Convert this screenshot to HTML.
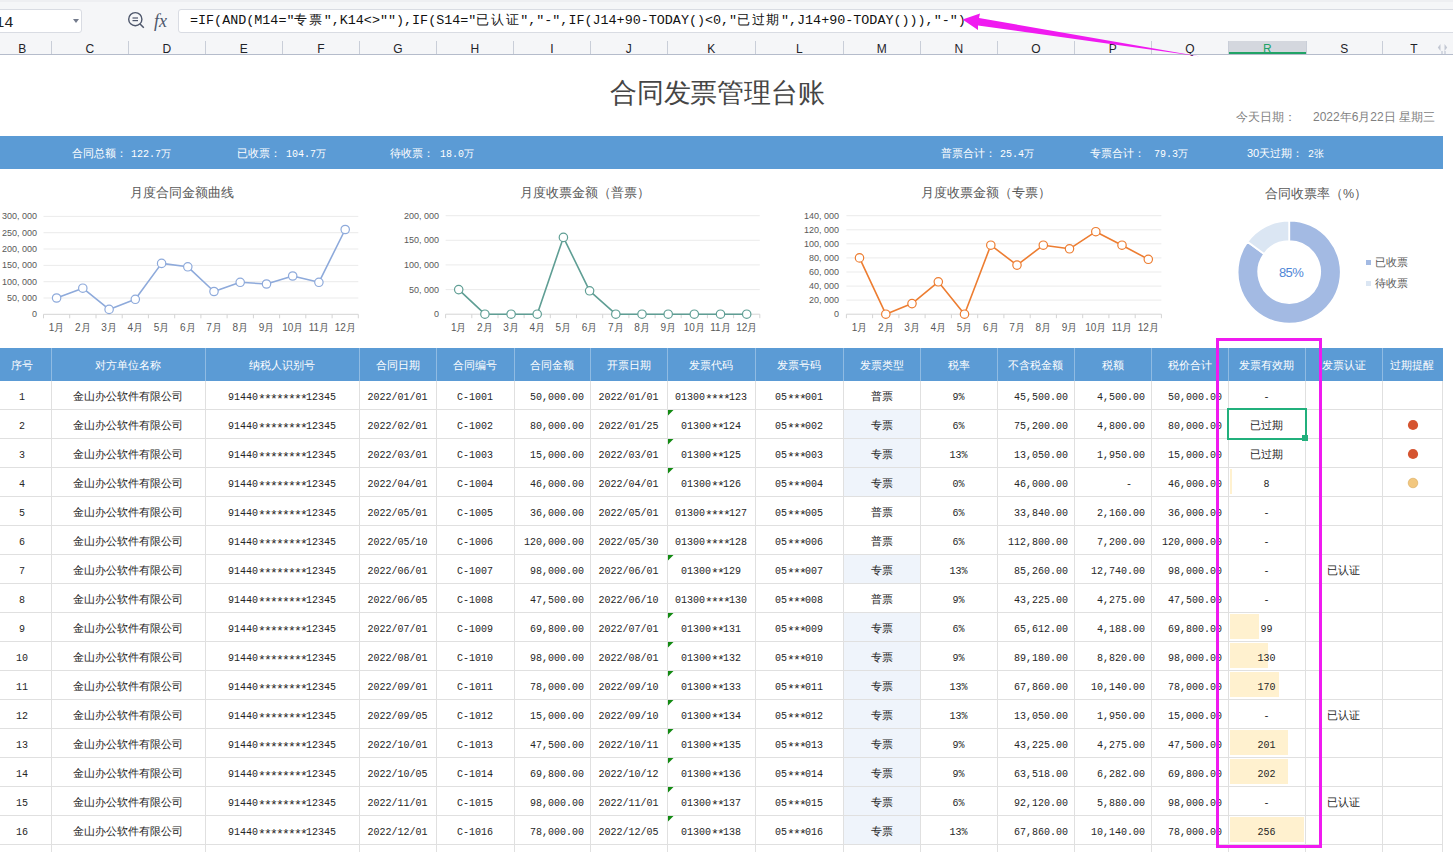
<!DOCTYPE html><html><head><meta charset="utf-8"><style>
html,body{margin:0;padding:0;width:1453px;height:852px;overflow:hidden;background:#fff;position:relative;font-family:"Liberation Sans", sans-serif}
.ab{position:absolute;white-space:nowrap}
.c{position:absolute;white-space:nowrap;text-align:center}
.m{font-family:"Liberation Mono", monospace}
.m b{font-weight:normal;letter-spacing:1.6px}
.cell{position:absolute;height:28px;line-height:34px;font-size:10px;color:#262626;font-family:"Liberation Mono", monospace;white-space:nowrap;overflow:visible}
.cj{font-size:11px;line-height:33px}
.cell i{font-style:normal;position:relative;top:3px;font-size:13px;letter-spacing:-1.8px;line-height:10px}
.hd{position:absolute;top:348px;height:33px;line-height:35px;font-size:11px;color:#fff;text-align:center}
</style></head><body>
<div class="ab" style="left:0;top:0;width:1453px;height:55px;background:#f5f6f8"></div>
<div class="ab" style="left:0;top:0;width:1453px;height:2px;background:#eeeff2"></div>
<div class="ab" style="left:-10px;top:9px;width:90px;height:22px;background:#fff;border:1px solid #d9dce3;border-radius:3px"></div>
<div class="ab m" style="left:-5px;top:13px;font-size:15.5px;line-height:20px;color:#222">14</div>
<div class="ab" style="left:73px;top:19px;width:0;height:0;border-left:3.5px solid transparent;border-right:3.5px solid transparent;border-top:4px solid #737b8c"></div>
<svg class="ab" style="left:125px;top:9px" width="22" height="22" viewBox="0 0 22 22"><circle cx="10.3" cy="10.2" r="6.6" fill="none" stroke="#4d566b" stroke-width="1.4"/><line x1="15" y1="15" x2="18.8" y2="18.8" stroke="#4d566b" stroke-width="1.5"/><line x1="7.5" y1="9" x2="13" y2="9" stroke="#4d566b" stroke-width="1.2"/><line x1="7.5" y1="11.6" x2="13" y2="11.6" stroke="#4d566b" stroke-width="1.2"/></svg>
<div class="ab" style="left:154px;top:10px;font-family:'Liberation Serif',serif;font-style:italic;font-size:18px;line-height:22px;color:#4d566b">fx</div>
<div class="ab" style="left:178px;top:9px;width:1290px;height:22px;background:#fff;border:1px solid #d9dce3;border-radius:3px"></div>
<div class="ab m" style="left:190px;top:12px;font-size:13.4px;line-height:17px;color:#111">=IF(AND(M14=″<b>专票</b>″,K14&lt;&gt;″″),IF(S14=″<b>已认证</b>″,″-″,IF(J14+90-TODAY()&lt;0,″<b>已过期</b>″,J14+90-TODAY())),″-″)</div>
<div class="ab" style="left:1228px;top:41px;width:78px;height:13px;background:#d4d7de"></div>
<div class="ab" style="left:1228px;top:52px;width:78px;height:2px;background:#21a366"></div>
<div class="c" style="left:-6.7px;top:41px;width:58px;font-size:12px;line-height:16px;color:#1f2329">B</div>
<div class="c" style="left:51.3px;top:41px;width:77px;font-size:12px;line-height:16px;color:#1f2329">C</div>
<div class="ab" style="left:51px;top:41px;width:1px;height:13px;background:#c9ced8"></div>
<div class="c" style="left:128.3px;top:41px;width:77px;font-size:12px;line-height:16px;color:#1f2329">D</div>
<div class="ab" style="left:128px;top:41px;width:1px;height:13px;background:#c9ced8"></div>
<div class="c" style="left:205.3px;top:41px;width:77px;font-size:12px;line-height:16px;color:#1f2329">E</div>
<div class="ab" style="left:205px;top:41px;width:1px;height:13px;background:#c9ced8"></div>
<div class="c" style="left:282.3px;top:41px;width:77px;font-size:12px;line-height:16px;color:#1f2329">F</div>
<div class="ab" style="left:282px;top:41px;width:1px;height:13px;background:#c9ced8"></div>
<div class="c" style="left:359.3px;top:41px;width:77px;font-size:12px;line-height:16px;color:#1f2329">G</div>
<div class="ab" style="left:359px;top:41px;width:1px;height:13px;background:#c9ced8"></div>
<div class="c" style="left:436.3px;top:41px;width:77px;font-size:12px;line-height:16px;color:#1f2329">H</div>
<div class="ab" style="left:436px;top:41px;width:1px;height:13px;background:#c9ced8"></div>
<div class="c" style="left:513.3px;top:41px;width:77px;font-size:12px;line-height:16px;color:#1f2329">I</div>
<div class="ab" style="left:513px;top:41px;width:1px;height:13px;background:#c9ced8"></div>
<div class="c" style="left:590.3px;top:41px;width:77px;font-size:12px;line-height:16px;color:#1f2329">J</div>
<div class="ab" style="left:590px;top:41px;width:1px;height:13px;background:#c9ced8"></div>
<div class="c" style="left:667.3px;top:41px;width:88px;font-size:12px;line-height:16px;color:#1f2329">K</div>
<div class="ab" style="left:667px;top:41px;width:1px;height:13px;background:#c9ced8"></div>
<div class="c" style="left:755.3px;top:41px;width:88px;font-size:12px;line-height:16px;color:#1f2329">L</div>
<div class="ab" style="left:755px;top:41px;width:1px;height:13px;background:#c9ced8"></div>
<div class="c" style="left:843.3px;top:41px;width:77px;font-size:12px;line-height:16px;color:#1f2329">M</div>
<div class="ab" style="left:843px;top:41px;width:1px;height:13px;background:#c9ced8"></div>
<div class="c" style="left:920.3px;top:41px;width:77px;font-size:12px;line-height:16px;color:#1f2329">N</div>
<div class="ab" style="left:920px;top:41px;width:1px;height:13px;background:#c9ced8"></div>
<div class="c" style="left:997.3px;top:41px;width:77px;font-size:12px;line-height:16px;color:#1f2329">O</div>
<div class="ab" style="left:997px;top:41px;width:1px;height:13px;background:#c9ced8"></div>
<div class="c" style="left:1074.3px;top:41px;width:77px;font-size:12px;line-height:16px;color:#1f2329">P</div>
<div class="ab" style="left:1074px;top:41px;width:1px;height:13px;background:#c9ced8"></div>
<div class="c" style="left:1151.3px;top:41px;width:77px;font-size:12px;line-height:16px;color:#1f2329">Q</div>
<div class="ab" style="left:1151px;top:41px;width:1px;height:13px;background:#c9ced8"></div>
<div class="c" style="left:1228.3px;top:41px;width:78px;font-size:12px;line-height:16px;color:#21a366">R</div>
<div class="ab" style="left:1228px;top:41px;width:1px;height:13px;background:#c9ced8"></div>
<div class="c" style="left:1306.3px;top:41px;width:76px;font-size:12px;line-height:16px;color:#1f2329">S</div>
<div class="ab" style="left:1306px;top:41px;width:1px;height:13px;background:#c9ced8"></div>
<div class="c" style="left:1382.3px;top:41px;width:63px;font-size:12px;line-height:16px;color:#1f2329">T</div>
<div class="ab" style="left:1382px;top:41px;width:1px;height:13px;background:#c9ced8"></div>
<div class="ab" style="left:0;top:54px;width:1453px;height:1px;background:#b5bccb"></div>
<svg class="ab" style="left:1436px;top:42px" width="14" height="13"><path d="M4.5,2 L1.8,5.5 L4.5,9 Z M8.5,2 L11.2,5.5 L8.5,9 Z" fill="#c3c8d3"/><rect x="5.5" y="9" width="1" height="3" fill="#b5bccb"/><rect x="8.5" y="9" width="1" height="3" fill="#b5bccb"/></svg>
<div class="ab" style="left:610px;top:76px;font-size:27px;line-height:34px;color:#454545;letter-spacing:-0.2px">合同发票管理台账</div>
<div class="ab" style="left:1236px;top:109px;font-size:12px;line-height:16px;color:#7f7f7f">今天日期：</div>
<div class="ab" style="left:1313px;top:109px;font-size:12px;line-height:16px;color:#7f7f7f">2022年6月22日 星期三</div>
<div class="ab" style="left:0;top:136px;width:1443px;height:33px;background:#5b9bd5"></div>
<div class="ab" style="left:72px;top:145px;font-size:11px;line-height:16px;color:#fff">合同总额：</div>
<div class="ab m" style="left:131px;top:147px;font-size:10px;line-height:16px;color:#fff">122.7万</div>
<div class="ab" style="left:237px;top:145px;font-size:11px;line-height:16px;color:#fff">已收票：</div>
<div class="ab m" style="left:286px;top:147px;font-size:10px;line-height:16px;color:#fff">104.7万</div>
<div class="ab" style="left:390px;top:145px;font-size:11px;line-height:16px;color:#fff">待收票：</div>
<div class="ab m" style="left:440px;top:147px;font-size:10px;line-height:16px;color:#fff">18.0万</div>
<div class="ab" style="left:941px;top:145px;font-size:11px;line-height:16px;color:#fff">普票合计：</div>
<div class="ab m" style="left:1000px;top:147px;font-size:10px;line-height:16px;color:#fff">25.4万</div>
<div class="ab" style="left:1090px;top:145px;font-size:11px;line-height:16px;color:#fff">专票合计：</div>
<div class="ab m" style="left:1154px;top:147px;font-size:10px;line-height:16px;color:#fff">79.3万</div>
<div class="ab" style="left:1247px;top:145px;font-size:11px;line-height:16px;color:#fff">30天过期：</div>
<div class="ab m" style="left:1308px;top:147px;font-size:10px;line-height:16px;color:#fff">2张</div>
<div class="c" style="left:82px;top:185px;width:200px;font-size:12.5px;line-height:16px;color:#595959">月度合同金额曲线</div>
<svg class="ab" style="left:0;top:170px" width="1453" height="170" viewBox="0 170 1453 170">
<line x1="43.5" y1="298.0" x2="358.3" y2="298.0" stroke="#ebebeb" stroke-width="1"/>
<line x1="43.5" y1="281.7" x2="358.3" y2="281.7" stroke="#ebebeb" stroke-width="1"/>
<line x1="43.5" y1="265.4" x2="358.3" y2="265.4" stroke="#ebebeb" stroke-width="1"/>
<line x1="43.5" y1="249.0" x2="358.3" y2="249.0" stroke="#ebebeb" stroke-width="1"/>
<line x1="43.5" y1="232.7" x2="358.3" y2="232.7" stroke="#ebebeb" stroke-width="1"/>
<line x1="43.5" y1="216.4" x2="358.3" y2="216.4" stroke="#ebebeb" stroke-width="1"/>
<line x1="43.5" y1="314.3" x2="358.3" y2="314.3" stroke="#d4d4d4" stroke-width="1"/>
<line x1="43.5" y1="314.3" x2="43.5" y2="318.3" stroke="#d4d4d4" stroke-width="1"/>
<line x1="69.7" y1="314.3" x2="69.7" y2="318.3" stroke="#d4d4d4" stroke-width="1"/>
<line x1="96.0" y1="314.3" x2="96.0" y2="318.3" stroke="#d4d4d4" stroke-width="1"/>
<line x1="122.2" y1="314.3" x2="122.2" y2="318.3" stroke="#d4d4d4" stroke-width="1"/>
<line x1="148.4" y1="314.3" x2="148.4" y2="318.3" stroke="#d4d4d4" stroke-width="1"/>
<line x1="174.7" y1="314.3" x2="174.7" y2="318.3" stroke="#d4d4d4" stroke-width="1"/>
<line x1="200.9" y1="314.3" x2="200.9" y2="318.3" stroke="#d4d4d4" stroke-width="1"/>
<line x1="227.1" y1="314.3" x2="227.1" y2="318.3" stroke="#d4d4d4" stroke-width="1"/>
<line x1="253.4" y1="314.3" x2="253.4" y2="318.3" stroke="#d4d4d4" stroke-width="1"/>
<line x1="279.6" y1="314.3" x2="279.6" y2="318.3" stroke="#d4d4d4" stroke-width="1"/>
<line x1="305.8" y1="314.3" x2="305.8" y2="318.3" stroke="#d4d4d4" stroke-width="1"/>
<line x1="332.1" y1="314.3" x2="332.1" y2="318.3" stroke="#d4d4d4" stroke-width="1"/>
<line x1="358.3" y1="314.3" x2="358.3" y2="318.3" stroke="#d4d4d4" stroke-width="1"/>
<polyline points="56.6,298.0 82.8,288.2 109.1,309.4 135.3,299.3 161.6,263.4 187.8,266.8 214.0,291.5 240.2,282.3 266.5,284.0 292.7,276.0 318.9,282.3 345.2,229.5" fill="none" stroke="#8eaadb" stroke-width="1.6" stroke-linejoin="round"/>
<circle cx="56.6" cy="298.0" r="4.2" fill="#fff" stroke="#8eaadb" stroke-width="1.2"/>
<circle cx="82.8" cy="288.2" r="4.2" fill="#fff" stroke="#8eaadb" stroke-width="1.2"/>
<circle cx="109.1" cy="309.4" r="4.2" fill="#fff" stroke="#8eaadb" stroke-width="1.2"/>
<circle cx="135.3" cy="299.3" r="4.2" fill="#fff" stroke="#8eaadb" stroke-width="1.2"/>
<circle cx="161.6" cy="263.4" r="4.2" fill="#fff" stroke="#8eaadb" stroke-width="1.2"/>
<circle cx="187.8" cy="266.8" r="4.2" fill="#fff" stroke="#8eaadb" stroke-width="1.2"/>
<circle cx="214.0" cy="291.5" r="4.2" fill="#fff" stroke="#8eaadb" stroke-width="1.2"/>
<circle cx="240.2" cy="282.3" r="4.2" fill="#fff" stroke="#8eaadb" stroke-width="1.2"/>
<circle cx="266.5" cy="284.0" r="4.2" fill="#fff" stroke="#8eaadb" stroke-width="1.2"/>
<circle cx="292.7" cy="276.0" r="4.2" fill="#fff" stroke="#8eaadb" stroke-width="1.2"/>
<circle cx="318.9" cy="282.3" r="4.2" fill="#fff" stroke="#8eaadb" stroke-width="1.2"/>
<circle cx="345.2" cy="229.5" r="4.2" fill="#fff" stroke="#8eaadb" stroke-width="1.2"/>
</svg>
<div class="ab" style="left:-23px;top:308.3px;width:60px;text-align:right;font-size:9px;line-height:12px;color:#595959">0</div>
<div class="ab" style="left:-23px;top:292.0px;width:60px;text-align:right;font-size:9px;line-height:12px;color:#595959">50, 000</div>
<div class="ab" style="left:-23px;top:275.7px;width:60px;text-align:right;font-size:9px;line-height:12px;color:#595959">100, 000</div>
<div class="ab" style="left:-23px;top:259.4px;width:60px;text-align:right;font-size:9px;line-height:12px;color:#595959">150, 000</div>
<div class="ab" style="left:-23px;top:243.0px;width:60px;text-align:right;font-size:9px;line-height:12px;color:#595959">200, 000</div>
<div class="ab" style="left:-23px;top:226.7px;width:60px;text-align:right;font-size:9px;line-height:12px;color:#595959">250, 000</div>
<div class="ab" style="left:-23px;top:210.4px;width:60px;text-align:right;font-size:9px;line-height:12px;color:#595959">300, 000</div>
<div class="c" style="left:36.6px;top:321px;width:40px;font-size:10px;line-height:14px;color:#595959">1月</div>
<div class="c" style="left:62.8px;top:321px;width:40px;font-size:10px;line-height:14px;color:#595959">2月</div>
<div class="c" style="left:89.1px;top:321px;width:40px;font-size:10px;line-height:14px;color:#595959">3月</div>
<div class="c" style="left:115.3px;top:321px;width:40px;font-size:10px;line-height:14px;color:#595959">4月</div>
<div class="c" style="left:141.6px;top:321px;width:40px;font-size:10px;line-height:14px;color:#595959">5月</div>
<div class="c" style="left:167.8px;top:321px;width:40px;font-size:10px;line-height:14px;color:#595959">6月</div>
<div class="c" style="left:194.0px;top:321px;width:40px;font-size:10px;line-height:14px;color:#595959">7月</div>
<div class="c" style="left:220.2px;top:321px;width:40px;font-size:10px;line-height:14px;color:#595959">8月</div>
<div class="c" style="left:246.5px;top:321px;width:40px;font-size:10px;line-height:14px;color:#595959">9月</div>
<div class="c" style="left:272.7px;top:321px;width:40px;font-size:10px;line-height:14px;color:#595959">10月</div>
<div class="c" style="left:298.9px;top:321px;width:40px;font-size:10px;line-height:14px;color:#595959">11月</div>
<div class="c" style="left:325.2px;top:321px;width:40px;font-size:10px;line-height:14px;color:#595959">12月</div>
<div class="c" style="left:485px;top:185px;width:200px;font-size:12.5px;line-height:16px;color:#595959">月度收票金额（普票）</div>
<svg class="ab" style="left:0;top:170px" width="1453" height="170" viewBox="0 170 1453 170">
<line x1="445.6" y1="289.6" x2="759.8" y2="289.6" stroke="#ebebeb" stroke-width="1"/>
<line x1="445.6" y1="264.9" x2="759.8" y2="264.9" stroke="#ebebeb" stroke-width="1"/>
<line x1="445.6" y1="240.3" x2="759.8" y2="240.3" stroke="#ebebeb" stroke-width="1"/>
<line x1="445.6" y1="215.7" x2="759.8" y2="215.7" stroke="#ebebeb" stroke-width="1"/>
<line x1="445.6" y1="314.2" x2="759.8" y2="314.2" stroke="#d4d4d4" stroke-width="1"/>
<line x1="445.6" y1="314.2" x2="445.6" y2="318.2" stroke="#d4d4d4" stroke-width="1"/>
<line x1="471.8" y1="314.2" x2="471.8" y2="318.2" stroke="#d4d4d4" stroke-width="1"/>
<line x1="498.0" y1="314.2" x2="498.0" y2="318.2" stroke="#d4d4d4" stroke-width="1"/>
<line x1="524.1" y1="314.2" x2="524.1" y2="318.2" stroke="#d4d4d4" stroke-width="1"/>
<line x1="550.3" y1="314.2" x2="550.3" y2="318.2" stroke="#d4d4d4" stroke-width="1"/>
<line x1="576.5" y1="314.2" x2="576.5" y2="318.2" stroke="#d4d4d4" stroke-width="1"/>
<line x1="602.7" y1="314.2" x2="602.7" y2="318.2" stroke="#d4d4d4" stroke-width="1"/>
<line x1="628.9" y1="314.2" x2="628.9" y2="318.2" stroke="#d4d4d4" stroke-width="1"/>
<line x1="655.1" y1="314.2" x2="655.1" y2="318.2" stroke="#d4d4d4" stroke-width="1"/>
<line x1="681.2" y1="314.2" x2="681.2" y2="318.2" stroke="#d4d4d4" stroke-width="1"/>
<line x1="707.4" y1="314.2" x2="707.4" y2="318.2" stroke="#d4d4d4" stroke-width="1"/>
<line x1="733.6" y1="314.2" x2="733.6" y2="318.2" stroke="#d4d4d4" stroke-width="1"/>
<line x1="759.8" y1="314.2" x2="759.8" y2="318.2" stroke="#d4d4d4" stroke-width="1"/>
<polyline points="458.7,289.6 484.9,314.2 511.1,314.2 537.2,314.2 563.4,237.4 589.6,290.8 615.8,314.2 642.0,314.2 668.2,314.2 694.3,314.2 720.5,314.2 746.7,314.2" fill="none" stroke="#5f9e94" stroke-width="1.6" stroke-linejoin="round"/>
<circle cx="458.7" cy="289.6" r="4.2" fill="#fff" stroke="#5f9e94" stroke-width="1.2"/>
<circle cx="484.9" cy="314.2" r="4.2" fill="#fff" stroke="#5f9e94" stroke-width="1.2"/>
<circle cx="511.1" cy="314.2" r="4.2" fill="#fff" stroke="#5f9e94" stroke-width="1.2"/>
<circle cx="537.2" cy="314.2" r="4.2" fill="#fff" stroke="#5f9e94" stroke-width="1.2"/>
<circle cx="563.4" cy="237.4" r="4.2" fill="#fff" stroke="#5f9e94" stroke-width="1.2"/>
<circle cx="589.6" cy="290.8" r="4.2" fill="#fff" stroke="#5f9e94" stroke-width="1.2"/>
<circle cx="615.8" cy="314.2" r="4.2" fill="#fff" stroke="#5f9e94" stroke-width="1.2"/>
<circle cx="642.0" cy="314.2" r="4.2" fill="#fff" stroke="#5f9e94" stroke-width="1.2"/>
<circle cx="668.2" cy="314.2" r="4.2" fill="#fff" stroke="#5f9e94" stroke-width="1.2"/>
<circle cx="694.3" cy="314.2" r="4.2" fill="#fff" stroke="#5f9e94" stroke-width="1.2"/>
<circle cx="720.5" cy="314.2" r="4.2" fill="#fff" stroke="#5f9e94" stroke-width="1.2"/>
<circle cx="746.7" cy="314.2" r="4.2" fill="#fff" stroke="#5f9e94" stroke-width="1.2"/>
</svg>
<div class="ab" style="left:379px;top:308.2px;width:60px;text-align:right;font-size:9px;line-height:12px;color:#595959">0</div>
<div class="ab" style="left:379px;top:283.6px;width:60px;text-align:right;font-size:9px;line-height:12px;color:#595959">50, 000</div>
<div class="ab" style="left:379px;top:258.9px;width:60px;text-align:right;font-size:9px;line-height:12px;color:#595959">100, 000</div>
<div class="ab" style="left:379px;top:234.3px;width:60px;text-align:right;font-size:9px;line-height:12px;color:#595959">150, 000</div>
<div class="ab" style="left:379px;top:209.7px;width:60px;text-align:right;font-size:9px;line-height:12px;color:#595959">200, 000</div>
<div class="c" style="left:438.7px;top:321px;width:40px;font-size:10px;line-height:14px;color:#595959">1月</div>
<div class="c" style="left:464.9px;top:321px;width:40px;font-size:10px;line-height:14px;color:#595959">2月</div>
<div class="c" style="left:491.1px;top:321px;width:40px;font-size:10px;line-height:14px;color:#595959">3月</div>
<div class="c" style="left:517.2px;top:321px;width:40px;font-size:10px;line-height:14px;color:#595959">4月</div>
<div class="c" style="left:543.4px;top:321px;width:40px;font-size:10px;line-height:14px;color:#595959">5月</div>
<div class="c" style="left:569.6px;top:321px;width:40px;font-size:10px;line-height:14px;color:#595959">6月</div>
<div class="c" style="left:595.8px;top:321px;width:40px;font-size:10px;line-height:14px;color:#595959">7月</div>
<div class="c" style="left:622.0px;top:321px;width:40px;font-size:10px;line-height:14px;color:#595959">8月</div>
<div class="c" style="left:648.2px;top:321px;width:40px;font-size:10px;line-height:14px;color:#595959">9月</div>
<div class="c" style="left:674.3px;top:321px;width:40px;font-size:10px;line-height:14px;color:#595959">10月</div>
<div class="c" style="left:700.5px;top:321px;width:40px;font-size:10px;line-height:14px;color:#595959">11月</div>
<div class="c" style="left:726.7px;top:321px;width:40px;font-size:10px;line-height:14px;color:#595959">12月</div>
<div class="c" style="left:886px;top:185px;width:200px;font-size:12.5px;line-height:16px;color:#595959">月度收票金额（专票）</div>
<svg class="ab" style="left:0;top:170px" width="1453" height="170" viewBox="0 170 1453 170">
<line x1="846.4" y1="300.1" x2="1161.4" y2="300.1" stroke="#ebebeb" stroke-width="1"/>
<line x1="846.4" y1="286.1" x2="1161.4" y2="286.1" stroke="#ebebeb" stroke-width="1"/>
<line x1="846.4" y1="272.0" x2="1161.4" y2="272.0" stroke="#ebebeb" stroke-width="1"/>
<line x1="846.4" y1="257.9" x2="1161.4" y2="257.9" stroke="#ebebeb" stroke-width="1"/>
<line x1="846.4" y1="243.8" x2="1161.4" y2="243.8" stroke="#ebebeb" stroke-width="1"/>
<line x1="846.4" y1="229.8" x2="1161.4" y2="229.8" stroke="#ebebeb" stroke-width="1"/>
<line x1="846.4" y1="215.7" x2="1161.4" y2="215.7" stroke="#ebebeb" stroke-width="1"/>
<line x1="846.4" y1="314.2" x2="1161.4" y2="314.2" stroke="#d4d4d4" stroke-width="1"/>
<line x1="846.4" y1="314.2" x2="846.4" y2="318.2" stroke="#d4d4d4" stroke-width="1"/>
<line x1="872.6" y1="314.2" x2="872.6" y2="318.2" stroke="#d4d4d4" stroke-width="1"/>
<line x1="898.9" y1="314.2" x2="898.9" y2="318.2" stroke="#d4d4d4" stroke-width="1"/>
<line x1="925.1" y1="314.2" x2="925.1" y2="318.2" stroke="#d4d4d4" stroke-width="1"/>
<line x1="951.4" y1="314.2" x2="951.4" y2="318.2" stroke="#d4d4d4" stroke-width="1"/>
<line x1="977.7" y1="314.2" x2="977.7" y2="318.2" stroke="#d4d4d4" stroke-width="1"/>
<line x1="1003.9" y1="314.2" x2="1003.9" y2="318.2" stroke="#d4d4d4" stroke-width="1"/>
<line x1="1030.2" y1="314.2" x2="1030.2" y2="318.2" stroke="#d4d4d4" stroke-width="1"/>
<line x1="1056.4" y1="314.2" x2="1056.4" y2="318.2" stroke="#d4d4d4" stroke-width="1"/>
<line x1="1082.7" y1="314.2" x2="1082.7" y2="318.2" stroke="#d4d4d4" stroke-width="1"/>
<line x1="1108.9" y1="314.2" x2="1108.9" y2="318.2" stroke="#d4d4d4" stroke-width="1"/>
<line x1="1135.2" y1="314.2" x2="1135.2" y2="318.2" stroke="#d4d4d4" stroke-width="1"/>
<line x1="1161.4" y1="314.2" x2="1161.4" y2="318.2" stroke="#d4d4d4" stroke-width="1"/>
<polyline points="859.5,257.9 885.8,314.2 912.0,303.6 938.3,281.8 964.5,314.2 990.8,245.2 1017.0,265.1 1043.3,245.2 1069.5,248.8 1095.8,231.7 1122.0,245.2 1148.3,259.3" fill="none" stroke="#ed7d31" stroke-width="1.6" stroke-linejoin="round"/>
<circle cx="859.5" cy="257.9" r="4.2" fill="#fff" stroke="#ed7d31" stroke-width="1.2"/>
<circle cx="885.8" cy="314.2" r="4.2" fill="#fff" stroke="#ed7d31" stroke-width="1.2"/>
<circle cx="912.0" cy="303.6" r="4.2" fill="#fff" stroke="#ed7d31" stroke-width="1.2"/>
<circle cx="938.3" cy="281.8" r="4.2" fill="#fff" stroke="#ed7d31" stroke-width="1.2"/>
<circle cx="964.5" cy="314.2" r="4.2" fill="#fff" stroke="#ed7d31" stroke-width="1.2"/>
<circle cx="990.8" cy="245.2" r="4.2" fill="#fff" stroke="#ed7d31" stroke-width="1.2"/>
<circle cx="1017.0" cy="265.1" r="4.2" fill="#fff" stroke="#ed7d31" stroke-width="1.2"/>
<circle cx="1043.3" cy="245.2" r="4.2" fill="#fff" stroke="#ed7d31" stroke-width="1.2"/>
<circle cx="1069.5" cy="248.8" r="4.2" fill="#fff" stroke="#ed7d31" stroke-width="1.2"/>
<circle cx="1095.8" cy="231.7" r="4.2" fill="#fff" stroke="#ed7d31" stroke-width="1.2"/>
<circle cx="1122.0" cy="245.2" r="4.2" fill="#fff" stroke="#ed7d31" stroke-width="1.2"/>
<circle cx="1148.3" cy="259.3" r="4.2" fill="#fff" stroke="#ed7d31" stroke-width="1.2"/>
</svg>
<div class="ab" style="left:779px;top:308.2px;width:60px;text-align:right;font-size:9px;line-height:12px;color:#595959">0</div>
<div class="ab" style="left:779px;top:294.1px;width:60px;text-align:right;font-size:9px;line-height:12px;color:#595959">20, 000</div>
<div class="ab" style="left:779px;top:280.1px;width:60px;text-align:right;font-size:9px;line-height:12px;color:#595959">40, 000</div>
<div class="ab" style="left:779px;top:266.0px;width:60px;text-align:right;font-size:9px;line-height:12px;color:#595959">60, 000</div>
<div class="ab" style="left:779px;top:251.9px;width:60px;text-align:right;font-size:9px;line-height:12px;color:#595959">80, 000</div>
<div class="ab" style="left:779px;top:237.8px;width:60px;text-align:right;font-size:9px;line-height:12px;color:#595959">100, 000</div>
<div class="ab" style="left:779px;top:223.8px;width:60px;text-align:right;font-size:9px;line-height:12px;color:#595959">120, 000</div>
<div class="ab" style="left:779px;top:209.7px;width:60px;text-align:right;font-size:9px;line-height:12px;color:#595959">140, 000</div>
<div class="c" style="left:839.5px;top:321px;width:40px;font-size:10px;line-height:14px;color:#595959">1月</div>
<div class="c" style="left:865.8px;top:321px;width:40px;font-size:10px;line-height:14px;color:#595959">2月</div>
<div class="c" style="left:892.0px;top:321px;width:40px;font-size:10px;line-height:14px;color:#595959">3月</div>
<div class="c" style="left:918.3px;top:321px;width:40px;font-size:10px;line-height:14px;color:#595959">4月</div>
<div class="c" style="left:944.5px;top:321px;width:40px;font-size:10px;line-height:14px;color:#595959">5月</div>
<div class="c" style="left:970.8px;top:321px;width:40px;font-size:10px;line-height:14px;color:#595959">6月</div>
<div class="c" style="left:997.0px;top:321px;width:40px;font-size:10px;line-height:14px;color:#595959">7月</div>
<div class="c" style="left:1023.3px;top:321px;width:40px;font-size:10px;line-height:14px;color:#595959">8月</div>
<div class="c" style="left:1049.5px;top:321px;width:40px;font-size:10px;line-height:14px;color:#595959">9月</div>
<div class="c" style="left:1075.8px;top:321px;width:40px;font-size:10px;line-height:14px;color:#595959">10月</div>
<div class="c" style="left:1102.0px;top:321px;width:40px;font-size:10px;line-height:14px;color:#595959">11月</div>
<div class="c" style="left:1128.3px;top:321px;width:40px;font-size:10px;line-height:14px;color:#595959">12月</div>
<svg class="ab" style="left:1180px;top:170px" width="273" height="170" viewBox="1180 170 273 170">
<path d="M1289.20,220.50 A51.60,51.60 0 1 1 1247.45,241.77 L1264.20,253.94 A30.90,30.90 0 1 0 1289.20,241.20 Z" fill="#a3bae3" stroke="#fff" stroke-width="1.8"/>
<path d="M1247.45,241.77 A51.60,51.60 0 0 1 1289.20,220.50 L1289.20,241.20 A30.90,30.90 0 0 0 1264.20,253.94 Z" fill="#dbe6f3" stroke="#fff" stroke-width="1.8"/>
<rect x="1366" y="260" width="5" height="5" fill="#a3bae3"/>
<rect x="1366" y="281" width="5" height="5" fill="#dbe6f3"/>
</svg>
<div class="c" style="left:1216px;top:186px;width:200px;font-size:12.5px;line-height:16px;color:#595959">合同收票率（%）</div>
<div class="c" style="left:1251px;top:265px;width:80px;font-size:13px;letter-spacing:-0.6px;line-height:16px;color:#4f86d6">85%</div>
<div class="ab" style="left:1375px;top:255px;font-size:10.5px;line-height:14px;color:#595959">已收票</div>
<div class="ab" style="left:1375px;top:276px;font-size:10.5px;line-height:14px;color:#595959">待收票</div>
<div class="ab" style="left:0;top:348px;width:1443px;height:33px;background:#5b9bd5"></div>
<div class="hd" style="left:-7px;width:58px">序号</div>
<div class="hd" style="left:51px;width:154px">对方单位名称</div>
<div class="ab" style="left:51px;top:348px;width:1px;height:33px;background:#8fbbe3"></div>
<div class="hd" style="left:205px;width:154px">纳税人识别号</div>
<div class="ab" style="left:205px;top:348px;width:1px;height:33px;background:#8fbbe3"></div>
<div class="hd" style="left:359px;width:77px">合同日期</div>
<div class="ab" style="left:359px;top:348px;width:1px;height:33px;background:#8fbbe3"></div>
<div class="hd" style="left:436px;width:78px">合同编号</div>
<div class="ab" style="left:436px;top:348px;width:1px;height:33px;background:#8fbbe3"></div>
<div class="hd" style="left:514px;width:76px">合同金额</div>
<div class="ab" style="left:514px;top:348px;width:1px;height:33px;background:#8fbbe3"></div>
<div class="hd" style="left:590px;width:77px">开票日期</div>
<div class="ab" style="left:590px;top:348px;width:1px;height:33px;background:#8fbbe3"></div>
<div class="hd" style="left:667px;width:88px">发票代码</div>
<div class="ab" style="left:667px;top:348px;width:1px;height:33px;background:#8fbbe3"></div>
<div class="hd" style="left:755px;width:88px">发票号码</div>
<div class="ab" style="left:755px;top:348px;width:1px;height:33px;background:#8fbbe3"></div>
<div class="hd" style="left:843px;width:77px">发票类型</div>
<div class="ab" style="left:843px;top:348px;width:1px;height:33px;background:#8fbbe3"></div>
<div class="hd" style="left:920px;width:77px">税率</div>
<div class="ab" style="left:920px;top:348px;width:1px;height:33px;background:#8fbbe3"></div>
<div class="hd" style="left:997px;width:77px">不含税金额</div>
<div class="ab" style="left:997px;top:348px;width:1px;height:33px;background:#8fbbe3"></div>
<div class="hd" style="left:1074px;width:77px">税额</div>
<div class="ab" style="left:1074px;top:348px;width:1px;height:33px;background:#8fbbe3"></div>
<div class="hd" style="left:1151px;width:77px">税价合计</div>
<div class="ab" style="left:1151px;top:348px;width:1px;height:33px;background:#8fbbe3"></div>
<div class="hd" style="left:1228px;width:77px">发票有效期</div>
<div class="ab" style="left:1228px;top:348px;width:1px;height:33px;background:#8fbbe3"></div>
<div class="hd" style="left:1305px;width:77px">发票认证</div>
<div class="ab" style="left:1305px;top:348px;width:1px;height:33px;background:#8fbbe3"></div>
<div class="hd" style="left:1382px;width:60px">过期提醒</div>
<div class="ab" style="left:1382px;top:348px;width:1px;height:33px;background:#8fbbe3"></div>
<div class="cell" style="left:-7px;top:381px;width:58px;text-align:center">1</div>
<div class="cell cj" style="left:51px;top:381px;width:154px;text-align:center">金山办公软件有限公司</div>
<div class="cell" style="left:205px;top:381px;width:154px;text-align:center">91440<i>********</i>12345</div>
<div class="cell" style="left:359px;top:381px;width:77px;text-align:center">2022/01/01</div>
<div class="cell" style="left:436px;top:381px;width:78px;text-align:center">C-1001</div>
<div class="cell" style="left:514px;top:381px;width:70px;text-align:right">50,000.00</div>
<div class="cell" style="left:590px;top:381px;width:77px;text-align:center">2022/01/01</div>
<div class="cell" style="left:667px;top:381px;width:88px;text-align:center">01300<i>****</i>123</div>
<div class="cell" style="left:755px;top:381px;width:88px;text-align:center">05<i>***</i>001</div>
<div class="cell cj" style="left:843px;top:381px;width:77px;text-align:center">普票</div>
<div class="cell" style="left:920px;top:381px;width:77px;text-align:center">9%</div>
<div class="cell" style="left:997px;top:381px;width:71px;text-align:right">45,500.00</div>
<div class="cell" style="left:1074px;top:381px;width:71px;text-align:right">4,500.00</div>
<div class="cell" style="left:1151px;top:381px;width:71px;text-align:right">50,000.00</div>
<div class="cell" style="left:1228px;top:381px;width:77px;text-align:center">-</div>
<div class="ab" style="left:844px;top:410px;width:76px;height:28px;background:#eff4fb"></div>
<div class="cell" style="left:-7px;top:410px;width:58px;text-align:center">2</div>
<div class="cell cj" style="left:51px;top:410px;width:154px;text-align:center">金山办公软件有限公司</div>
<div class="cell" style="left:205px;top:410px;width:154px;text-align:center">91440<i>********</i>12345</div>
<div class="cell" style="left:359px;top:410px;width:77px;text-align:center">2022/02/01</div>
<div class="cell" style="left:436px;top:410px;width:78px;text-align:center">C-1002</div>
<div class="cell" style="left:514px;top:410px;width:70px;text-align:right">80,000.00</div>
<div class="cell" style="left:590px;top:410px;width:77px;text-align:center">2022/01/25</div>
<div class="cell" style="left:667px;top:410px;width:88px;text-align:center">01300<i>**</i>124</div>
<div class="cell" style="left:755px;top:410px;width:88px;text-align:center">05<i>***</i>002</div>
<div class="cell cj" style="left:843px;top:410px;width:77px;text-align:center">专票</div>
<div class="cell" style="left:920px;top:410px;width:77px;text-align:center">6%</div>
<div class="cell" style="left:997px;top:410px;width:71px;text-align:right">75,200.00</div>
<div class="cell" style="left:1074px;top:410px;width:71px;text-align:right">4,800.00</div>
<div class="cell" style="left:1151px;top:410px;width:71px;text-align:right">80,000.00</div>
<div class="cell cj" style="left:1228px;top:410px;width:77px;text-align:center">已过期</div>
<svg class="ab" style="left:668px;top:410px" width="6" height="6"><path d="M0,0 L5.5,0 L0,5.5 Z" fill="#128a12"/></svg>
<svg class="ab" style="left:1406px;top:418px" width="14" height="14"><circle cx="7" cy="7" r="5.1" fill="#d55430"/></svg>
<div class="ab" style="left:844px;top:439px;width:76px;height:28px;background:#eff4fb"></div>
<div class="cell" style="left:-7px;top:439px;width:58px;text-align:center">3</div>
<div class="cell cj" style="left:51px;top:439px;width:154px;text-align:center">金山办公软件有限公司</div>
<div class="cell" style="left:205px;top:439px;width:154px;text-align:center">91440<i>********</i>12345</div>
<div class="cell" style="left:359px;top:439px;width:77px;text-align:center">2022/03/01</div>
<div class="cell" style="left:436px;top:439px;width:78px;text-align:center">C-1003</div>
<div class="cell" style="left:514px;top:439px;width:70px;text-align:right">15,000.00</div>
<div class="cell" style="left:590px;top:439px;width:77px;text-align:center">2022/03/01</div>
<div class="cell" style="left:667px;top:439px;width:88px;text-align:center">01300<i>**</i>125</div>
<div class="cell" style="left:755px;top:439px;width:88px;text-align:center">05<i>***</i>003</div>
<div class="cell cj" style="left:843px;top:439px;width:77px;text-align:center">专票</div>
<div class="cell" style="left:920px;top:439px;width:77px;text-align:center">13%</div>
<div class="cell" style="left:997px;top:439px;width:71px;text-align:right">13,050.00</div>
<div class="cell" style="left:1074px;top:439px;width:71px;text-align:right">1,950.00</div>
<div class="cell" style="left:1151px;top:439px;width:71px;text-align:right">15,000.00</div>
<div class="cell cj" style="left:1228px;top:439px;width:77px;text-align:center">已过期</div>
<svg class="ab" style="left:668px;top:439px" width="6" height="6"><path d="M0,0 L5.5,0 L0,5.5 Z" fill="#128a12"/></svg>
<svg class="ab" style="left:1406px;top:447px" width="14" height="14"><circle cx="7" cy="7" r="5.1" fill="#d55430"/></svg>
<div class="ab" style="left:844px;top:468px;width:76px;height:28px;background:#eff4fb"></div>
<div class="ab" style="left:1230px;top:469px;width:2px;height:25px;background:#fff1cf"></div>
<div class="cell" style="left:-7px;top:468px;width:58px;text-align:center">4</div>
<div class="cell cj" style="left:51px;top:468px;width:154px;text-align:center">金山办公软件有限公司</div>
<div class="cell" style="left:205px;top:468px;width:154px;text-align:center">91440<i>********</i>12345</div>
<div class="cell" style="left:359px;top:468px;width:77px;text-align:center">2022/04/01</div>
<div class="cell" style="left:436px;top:468px;width:78px;text-align:center">C-1004</div>
<div class="cell" style="left:514px;top:468px;width:70px;text-align:right">46,000.00</div>
<div class="cell" style="left:590px;top:468px;width:77px;text-align:center">2022/04/01</div>
<div class="cell" style="left:667px;top:468px;width:88px;text-align:center">01300<i>**</i>126</div>
<div class="cell" style="left:755px;top:468px;width:88px;text-align:center">05<i>***</i>004</div>
<div class="cell cj" style="left:843px;top:468px;width:77px;text-align:center">专票</div>
<div class="cell" style="left:920px;top:468px;width:77px;text-align:center">0%</div>
<div class="cell" style="left:997px;top:468px;width:71px;text-align:right">46,000.00</div>
<div class="cell" style="left:1124px;top:468px;width:10px;text-align:center">-</div>
<div class="cell" style="left:1151px;top:468px;width:71px;text-align:right">46,000.00</div>
<div class="cell" style="left:1228px;top:468px;width:77px;text-align:center">8</div>
<svg class="ab" style="left:668px;top:468px" width="6" height="6"><path d="M0,0 L5.5,0 L0,5.5 Z" fill="#128a12"/></svg>
<svg class="ab" style="left:1406px;top:476px" width="14" height="14"><circle cx="7" cy="7" r="4.8" fill="#f2c77f" stroke="#d9a95a" stroke-width="0.6"/></svg>
<div class="cell" style="left:-7px;top:497px;width:58px;text-align:center">5</div>
<div class="cell cj" style="left:51px;top:497px;width:154px;text-align:center">金山办公软件有限公司</div>
<div class="cell" style="left:205px;top:497px;width:154px;text-align:center">91440<i>********</i>12345</div>
<div class="cell" style="left:359px;top:497px;width:77px;text-align:center">2022/05/01</div>
<div class="cell" style="left:436px;top:497px;width:78px;text-align:center">C-1005</div>
<div class="cell" style="left:514px;top:497px;width:70px;text-align:right">36,000.00</div>
<div class="cell" style="left:590px;top:497px;width:77px;text-align:center">2022/05/01</div>
<div class="cell" style="left:667px;top:497px;width:88px;text-align:center">01300<i>****</i>127</div>
<div class="cell" style="left:755px;top:497px;width:88px;text-align:center">05<i>***</i>005</div>
<div class="cell cj" style="left:843px;top:497px;width:77px;text-align:center">普票</div>
<div class="cell" style="left:920px;top:497px;width:77px;text-align:center">6%</div>
<div class="cell" style="left:997px;top:497px;width:71px;text-align:right">33,840.00</div>
<div class="cell" style="left:1074px;top:497px;width:71px;text-align:right">2,160.00</div>
<div class="cell" style="left:1151px;top:497px;width:71px;text-align:right">36,000.00</div>
<div class="cell" style="left:1228px;top:497px;width:77px;text-align:center">-</div>
<div class="cell" style="left:-7px;top:526px;width:58px;text-align:center">6</div>
<div class="cell cj" style="left:51px;top:526px;width:154px;text-align:center">金山办公软件有限公司</div>
<div class="cell" style="left:205px;top:526px;width:154px;text-align:center">91440<i>********</i>12345</div>
<div class="cell" style="left:359px;top:526px;width:77px;text-align:center">2022/05/10</div>
<div class="cell" style="left:436px;top:526px;width:78px;text-align:center">C-1006</div>
<div class="cell" style="left:514px;top:526px;width:70px;text-align:right">120,000.00</div>
<div class="cell" style="left:590px;top:526px;width:77px;text-align:center">2022/05/30</div>
<div class="cell" style="left:667px;top:526px;width:88px;text-align:center">01300<i>****</i>128</div>
<div class="cell" style="left:755px;top:526px;width:88px;text-align:center">05<i>***</i>006</div>
<div class="cell cj" style="left:843px;top:526px;width:77px;text-align:center">普票</div>
<div class="cell" style="left:920px;top:526px;width:77px;text-align:center">6%</div>
<div class="cell" style="left:997px;top:526px;width:71px;text-align:right">112,800.00</div>
<div class="cell" style="left:1074px;top:526px;width:71px;text-align:right">7,200.00</div>
<div class="cell" style="left:1151px;top:526px;width:71px;text-align:right">120,000.00</div>
<div class="cell" style="left:1228px;top:526px;width:77px;text-align:center">-</div>
<div class="ab" style="left:844px;top:555px;width:76px;height:28px;background:#eff4fb"></div>
<div class="cell" style="left:-7px;top:555px;width:58px;text-align:center">7</div>
<div class="cell cj" style="left:51px;top:555px;width:154px;text-align:center">金山办公软件有限公司</div>
<div class="cell" style="left:205px;top:555px;width:154px;text-align:center">91440<i>********</i>12345</div>
<div class="cell" style="left:359px;top:555px;width:77px;text-align:center">2022/06/01</div>
<div class="cell" style="left:436px;top:555px;width:78px;text-align:center">C-1007</div>
<div class="cell" style="left:514px;top:555px;width:70px;text-align:right">98,000.00</div>
<div class="cell" style="left:590px;top:555px;width:77px;text-align:center">2022/06/01</div>
<div class="cell" style="left:667px;top:555px;width:88px;text-align:center">01300<i>**</i>129</div>
<div class="cell" style="left:755px;top:555px;width:88px;text-align:center">05<i>***</i>007</div>
<div class="cell cj" style="left:843px;top:555px;width:77px;text-align:center">专票</div>
<div class="cell" style="left:920px;top:555px;width:77px;text-align:center">13%</div>
<div class="cell" style="left:997px;top:555px;width:71px;text-align:right">85,260.00</div>
<div class="cell" style="left:1074px;top:555px;width:71px;text-align:right">12,740.00</div>
<div class="cell" style="left:1151px;top:555px;width:71px;text-align:right">98,000.00</div>
<div class="cell" style="left:1228px;top:555px;width:77px;text-align:center">-</div>
<div class="cell cj" style="left:1305px;top:555px;width:77px;text-align:center">已认证</div>
<svg class="ab" style="left:668px;top:555px" width="6" height="6"><path d="M0,0 L5.5,0 L0,5.5 Z" fill="#128a12"/></svg>
<div class="cell" style="left:-7px;top:584px;width:58px;text-align:center">8</div>
<div class="cell cj" style="left:51px;top:584px;width:154px;text-align:center">金山办公软件有限公司</div>
<div class="cell" style="left:205px;top:584px;width:154px;text-align:center">91440<i>********</i>12345</div>
<div class="cell" style="left:359px;top:584px;width:77px;text-align:center">2022/06/05</div>
<div class="cell" style="left:436px;top:584px;width:78px;text-align:center">C-1008</div>
<div class="cell" style="left:514px;top:584px;width:70px;text-align:right">47,500.00</div>
<div class="cell" style="left:590px;top:584px;width:77px;text-align:center">2022/06/10</div>
<div class="cell" style="left:667px;top:584px;width:88px;text-align:center">01300<i>****</i>130</div>
<div class="cell" style="left:755px;top:584px;width:88px;text-align:center">05<i>***</i>008</div>
<div class="cell cj" style="left:843px;top:584px;width:77px;text-align:center">普票</div>
<div class="cell" style="left:920px;top:584px;width:77px;text-align:center">9%</div>
<div class="cell" style="left:997px;top:584px;width:71px;text-align:right">43,225.00</div>
<div class="cell" style="left:1074px;top:584px;width:71px;text-align:right">4,275.00</div>
<div class="cell" style="left:1151px;top:584px;width:71px;text-align:right">47,500.00</div>
<div class="cell" style="left:1228px;top:584px;width:77px;text-align:center">-</div>
<div class="ab" style="left:844px;top:613px;width:76px;height:28px;background:#eff4fb"></div>
<div class="ab" style="left:1230px;top:614px;width:29px;height:25px;background:#fff1cf"></div>
<div class="cell" style="left:-7px;top:613px;width:58px;text-align:center">9</div>
<div class="cell cj" style="left:51px;top:613px;width:154px;text-align:center">金山办公软件有限公司</div>
<div class="cell" style="left:205px;top:613px;width:154px;text-align:center">91440<i>********</i>12345</div>
<div class="cell" style="left:359px;top:613px;width:77px;text-align:center">2022/07/01</div>
<div class="cell" style="left:436px;top:613px;width:78px;text-align:center">C-1009</div>
<div class="cell" style="left:514px;top:613px;width:70px;text-align:right">69,800.00</div>
<div class="cell" style="left:590px;top:613px;width:77px;text-align:center">2022/07/01</div>
<div class="cell" style="left:667px;top:613px;width:88px;text-align:center">01300<i>**</i>131</div>
<div class="cell" style="left:755px;top:613px;width:88px;text-align:center">05<i>***</i>009</div>
<div class="cell cj" style="left:843px;top:613px;width:77px;text-align:center">专票</div>
<div class="cell" style="left:920px;top:613px;width:77px;text-align:center">6%</div>
<div class="cell" style="left:997px;top:613px;width:71px;text-align:right">65,612.00</div>
<div class="cell" style="left:1074px;top:613px;width:71px;text-align:right">4,188.00</div>
<div class="cell" style="left:1151px;top:613px;width:71px;text-align:right">69,800.00</div>
<div class="cell" style="left:1228px;top:613px;width:77px;text-align:center">99</div>
<svg class="ab" style="left:668px;top:613px" width="6" height="6"><path d="M0,0 L5.5,0 L0,5.5 Z" fill="#128a12"/></svg>
<div class="ab" style="left:844px;top:642px;width:76px;height:28px;background:#eff4fb"></div>
<div class="ab" style="left:1230px;top:643px;width:38px;height:25px;background:#fff1cf"></div>
<div class="cell" style="left:-7px;top:642px;width:58px;text-align:center">10</div>
<div class="cell cj" style="left:51px;top:642px;width:154px;text-align:center">金山办公软件有限公司</div>
<div class="cell" style="left:205px;top:642px;width:154px;text-align:center">91440<i>********</i>12345</div>
<div class="cell" style="left:359px;top:642px;width:77px;text-align:center">2022/08/01</div>
<div class="cell" style="left:436px;top:642px;width:78px;text-align:center">C-1010</div>
<div class="cell" style="left:514px;top:642px;width:70px;text-align:right">98,000.00</div>
<div class="cell" style="left:590px;top:642px;width:77px;text-align:center">2022/08/01</div>
<div class="cell" style="left:667px;top:642px;width:88px;text-align:center">01300<i>**</i>132</div>
<div class="cell" style="left:755px;top:642px;width:88px;text-align:center">05<i>***</i>010</div>
<div class="cell cj" style="left:843px;top:642px;width:77px;text-align:center">专票</div>
<div class="cell" style="left:920px;top:642px;width:77px;text-align:center">9%</div>
<div class="cell" style="left:997px;top:642px;width:71px;text-align:right">89,180.00</div>
<div class="cell" style="left:1074px;top:642px;width:71px;text-align:right">8,820.00</div>
<div class="cell" style="left:1151px;top:642px;width:71px;text-align:right">98,000.00</div>
<div class="cell" style="left:1228px;top:642px;width:77px;text-align:center">130</div>
<svg class="ab" style="left:668px;top:642px" width="6" height="6"><path d="M0,0 L5.5,0 L0,5.5 Z" fill="#128a12"/></svg>
<div class="ab" style="left:844px;top:671px;width:76px;height:28px;background:#eff4fb"></div>
<div class="ab" style="left:1230px;top:672px;width:49px;height:25px;background:#fff1cf"></div>
<div class="cell" style="left:-7px;top:671px;width:58px;text-align:center">11</div>
<div class="cell cj" style="left:51px;top:671px;width:154px;text-align:center">金山办公软件有限公司</div>
<div class="cell" style="left:205px;top:671px;width:154px;text-align:center">91440<i>********</i>12345</div>
<div class="cell" style="left:359px;top:671px;width:77px;text-align:center">2022/09/01</div>
<div class="cell" style="left:436px;top:671px;width:78px;text-align:center">C-1011</div>
<div class="cell" style="left:514px;top:671px;width:70px;text-align:right">78,000.00</div>
<div class="cell" style="left:590px;top:671px;width:77px;text-align:center">2022/09/10</div>
<div class="cell" style="left:667px;top:671px;width:88px;text-align:center">01300<i>**</i>133</div>
<div class="cell" style="left:755px;top:671px;width:88px;text-align:center">05<i>***</i>011</div>
<div class="cell cj" style="left:843px;top:671px;width:77px;text-align:center">专票</div>
<div class="cell" style="left:920px;top:671px;width:77px;text-align:center">13%</div>
<div class="cell" style="left:997px;top:671px;width:71px;text-align:right">67,860.00</div>
<div class="cell" style="left:1074px;top:671px;width:71px;text-align:right">10,140.00</div>
<div class="cell" style="left:1151px;top:671px;width:71px;text-align:right">78,000.00</div>
<div class="cell" style="left:1228px;top:671px;width:77px;text-align:center">170</div>
<svg class="ab" style="left:668px;top:671px" width="6" height="6"><path d="M0,0 L5.5,0 L0,5.5 Z" fill="#128a12"/></svg>
<div class="ab" style="left:844px;top:700px;width:76px;height:28px;background:#eff4fb"></div>
<div class="cell" style="left:-7px;top:700px;width:58px;text-align:center">12</div>
<div class="cell cj" style="left:51px;top:700px;width:154px;text-align:center">金山办公软件有限公司</div>
<div class="cell" style="left:205px;top:700px;width:154px;text-align:center">91440<i>********</i>12345</div>
<div class="cell" style="left:359px;top:700px;width:77px;text-align:center">2022/09/05</div>
<div class="cell" style="left:436px;top:700px;width:78px;text-align:center">C-1012</div>
<div class="cell" style="left:514px;top:700px;width:70px;text-align:right">15,000.00</div>
<div class="cell" style="left:590px;top:700px;width:77px;text-align:center">2022/09/10</div>
<div class="cell" style="left:667px;top:700px;width:88px;text-align:center">01300<i>**</i>134</div>
<div class="cell" style="left:755px;top:700px;width:88px;text-align:center">05<i>***</i>012</div>
<div class="cell cj" style="left:843px;top:700px;width:77px;text-align:center">专票</div>
<div class="cell" style="left:920px;top:700px;width:77px;text-align:center">13%</div>
<div class="cell" style="left:997px;top:700px;width:71px;text-align:right">13,050.00</div>
<div class="cell" style="left:1074px;top:700px;width:71px;text-align:right">1,950.00</div>
<div class="cell" style="left:1151px;top:700px;width:71px;text-align:right">15,000.00</div>
<div class="cell" style="left:1228px;top:700px;width:77px;text-align:center">-</div>
<div class="cell cj" style="left:1305px;top:700px;width:77px;text-align:center">已认证</div>
<svg class="ab" style="left:668px;top:700px" width="6" height="6"><path d="M0,0 L5.5,0 L0,5.5 Z" fill="#128a12"/></svg>
<div class="ab" style="left:844px;top:729px;width:76px;height:28px;background:#eff4fb"></div>
<div class="ab" style="left:1230px;top:730px;width:58px;height:25px;background:#fff1cf"></div>
<div class="cell" style="left:-7px;top:729px;width:58px;text-align:center">13</div>
<div class="cell cj" style="left:51px;top:729px;width:154px;text-align:center">金山办公软件有限公司</div>
<div class="cell" style="left:205px;top:729px;width:154px;text-align:center">91440<i>********</i>12345</div>
<div class="cell" style="left:359px;top:729px;width:77px;text-align:center">2022/10/01</div>
<div class="cell" style="left:436px;top:729px;width:78px;text-align:center">C-1013</div>
<div class="cell" style="left:514px;top:729px;width:70px;text-align:right">47,500.00</div>
<div class="cell" style="left:590px;top:729px;width:77px;text-align:center">2022/10/11</div>
<div class="cell" style="left:667px;top:729px;width:88px;text-align:center">01300<i>**</i>135</div>
<div class="cell" style="left:755px;top:729px;width:88px;text-align:center">05<i>***</i>013</div>
<div class="cell cj" style="left:843px;top:729px;width:77px;text-align:center">专票</div>
<div class="cell" style="left:920px;top:729px;width:77px;text-align:center">9%</div>
<div class="cell" style="left:997px;top:729px;width:71px;text-align:right">43,225.00</div>
<div class="cell" style="left:1074px;top:729px;width:71px;text-align:right">4,275.00</div>
<div class="cell" style="left:1151px;top:729px;width:71px;text-align:right">47,500.00</div>
<div class="cell" style="left:1228px;top:729px;width:77px;text-align:center">201</div>
<svg class="ab" style="left:668px;top:729px" width="6" height="6"><path d="M0,0 L5.5,0 L0,5.5 Z" fill="#128a12"/></svg>
<div class="ab" style="left:844px;top:758px;width:76px;height:28px;background:#eff4fb"></div>
<div class="ab" style="left:1230px;top:759px;width:58px;height:25px;background:#fff1cf"></div>
<div class="cell" style="left:-7px;top:758px;width:58px;text-align:center">14</div>
<div class="cell cj" style="left:51px;top:758px;width:154px;text-align:center">金山办公软件有限公司</div>
<div class="cell" style="left:205px;top:758px;width:154px;text-align:center">91440<i>********</i>12345</div>
<div class="cell" style="left:359px;top:758px;width:77px;text-align:center">2022/10/05</div>
<div class="cell" style="left:436px;top:758px;width:78px;text-align:center">C-1014</div>
<div class="cell" style="left:514px;top:758px;width:70px;text-align:right">69,800.00</div>
<div class="cell" style="left:590px;top:758px;width:77px;text-align:center">2022/10/12</div>
<div class="cell" style="left:667px;top:758px;width:88px;text-align:center">01300<i>**</i>136</div>
<div class="cell" style="left:755px;top:758px;width:88px;text-align:center">05<i>***</i>014</div>
<div class="cell cj" style="left:843px;top:758px;width:77px;text-align:center">专票</div>
<div class="cell" style="left:920px;top:758px;width:77px;text-align:center">9%</div>
<div class="cell" style="left:997px;top:758px;width:71px;text-align:right">63,518.00</div>
<div class="cell" style="left:1074px;top:758px;width:71px;text-align:right">6,282.00</div>
<div class="cell" style="left:1151px;top:758px;width:71px;text-align:right">69,800.00</div>
<div class="cell" style="left:1228px;top:758px;width:77px;text-align:center">202</div>
<svg class="ab" style="left:668px;top:758px" width="6" height="6"><path d="M0,0 L5.5,0 L0,5.5 Z" fill="#128a12"/></svg>
<div class="ab" style="left:844px;top:787px;width:76px;height:28px;background:#eff4fb"></div>
<div class="cell" style="left:-7px;top:787px;width:58px;text-align:center">15</div>
<div class="cell cj" style="left:51px;top:787px;width:154px;text-align:center">金山办公软件有限公司</div>
<div class="cell" style="left:205px;top:787px;width:154px;text-align:center">91440<i>********</i>12345</div>
<div class="cell" style="left:359px;top:787px;width:77px;text-align:center">2022/11/01</div>
<div class="cell" style="left:436px;top:787px;width:78px;text-align:center">C-1015</div>
<div class="cell" style="left:514px;top:787px;width:70px;text-align:right">98,000.00</div>
<div class="cell" style="left:590px;top:787px;width:77px;text-align:center">2022/11/01</div>
<div class="cell" style="left:667px;top:787px;width:88px;text-align:center">01300<i>**</i>137</div>
<div class="cell" style="left:755px;top:787px;width:88px;text-align:center">05<i>***</i>015</div>
<div class="cell cj" style="left:843px;top:787px;width:77px;text-align:center">专票</div>
<div class="cell" style="left:920px;top:787px;width:77px;text-align:center">6%</div>
<div class="cell" style="left:997px;top:787px;width:71px;text-align:right">92,120.00</div>
<div class="cell" style="left:1074px;top:787px;width:71px;text-align:right">5,880.00</div>
<div class="cell" style="left:1151px;top:787px;width:71px;text-align:right">98,000.00</div>
<div class="cell" style="left:1228px;top:787px;width:77px;text-align:center">-</div>
<div class="cell cj" style="left:1305px;top:787px;width:77px;text-align:center">已认证</div>
<svg class="ab" style="left:668px;top:787px" width="6" height="6"><path d="M0,0 L5.5,0 L0,5.5 Z" fill="#128a12"/></svg>
<div class="ab" style="left:844px;top:816px;width:76px;height:28px;background:#eff4fb"></div>
<div class="ab" style="left:1230px;top:817px;width:74px;height:25px;background:#fff1cf"></div>
<div class="cell" style="left:-7px;top:816px;width:58px;text-align:center">16</div>
<div class="cell cj" style="left:51px;top:816px;width:154px;text-align:center">金山办公软件有限公司</div>
<div class="cell" style="left:205px;top:816px;width:154px;text-align:center">91440<i>********</i>12345</div>
<div class="cell" style="left:359px;top:816px;width:77px;text-align:center">2022/12/01</div>
<div class="cell" style="left:436px;top:816px;width:78px;text-align:center">C-1016</div>
<div class="cell" style="left:514px;top:816px;width:70px;text-align:right">78,000.00</div>
<div class="cell" style="left:590px;top:816px;width:77px;text-align:center">2022/12/05</div>
<div class="cell" style="left:667px;top:816px;width:88px;text-align:center">01300<i>**</i>138</div>
<div class="cell" style="left:755px;top:816px;width:88px;text-align:center">05<i>***</i>016</div>
<div class="cell cj" style="left:843px;top:816px;width:77px;text-align:center">专票</div>
<div class="cell" style="left:920px;top:816px;width:77px;text-align:center">13%</div>
<div class="cell" style="left:997px;top:816px;width:71px;text-align:right">67,860.00</div>
<div class="cell" style="left:1074px;top:816px;width:71px;text-align:right">10,140.00</div>
<div class="cell" style="left:1151px;top:816px;width:71px;text-align:right">78,000.00</div>
<div class="cell" style="left:1228px;top:816px;width:77px;text-align:center">256</div>
<svg class="ab" style="left:668px;top:816px" width="6" height="6"><path d="M0,0 L5.5,0 L0,5.5 Z" fill="#128a12"/></svg>
<div class="ab" style="left:0;top:409px;width:1443px;height:1px;background:#e0e0e0"></div>
<div class="ab" style="left:0;top:438px;width:1443px;height:1px;background:#e0e0e0"></div>
<div class="ab" style="left:0;top:467px;width:1443px;height:1px;background:#e0e0e0"></div>
<div class="ab" style="left:0;top:496px;width:1443px;height:1px;background:#e0e0e0"></div>
<div class="ab" style="left:0;top:525px;width:1443px;height:1px;background:#e0e0e0"></div>
<div class="ab" style="left:0;top:554px;width:1443px;height:1px;background:#e0e0e0"></div>
<div class="ab" style="left:0;top:583px;width:1443px;height:1px;background:#e0e0e0"></div>
<div class="ab" style="left:0;top:612px;width:1443px;height:1px;background:#e0e0e0"></div>
<div class="ab" style="left:0;top:641px;width:1443px;height:1px;background:#e0e0e0"></div>
<div class="ab" style="left:0;top:670px;width:1443px;height:1px;background:#e0e0e0"></div>
<div class="ab" style="left:0;top:699px;width:1443px;height:1px;background:#e0e0e0"></div>
<div class="ab" style="left:0;top:728px;width:1443px;height:1px;background:#e0e0e0"></div>
<div class="ab" style="left:0;top:757px;width:1443px;height:1px;background:#e0e0e0"></div>
<div class="ab" style="left:0;top:786px;width:1443px;height:1px;background:#e0e0e0"></div>
<div class="ab" style="left:0;top:815px;width:1443px;height:1px;background:#e0e0e0"></div>
<div class="ab" style="left:0;top:844px;width:1443px;height:1px;background:#e0e0e0"></div>
<div class="ab" style="left:0;top:873px;width:1443px;height:1px;background:#e0e0e0"></div>
<div class="ab" style="left:51px;top:381px;width:1px;height:471px;background:#e0e0e0"></div>
<div class="ab" style="left:205px;top:381px;width:1px;height:471px;background:#e0e0e0"></div>
<div class="ab" style="left:359px;top:381px;width:1px;height:471px;background:#e0e0e0"></div>
<div class="ab" style="left:436px;top:381px;width:1px;height:471px;background:#e0e0e0"></div>
<div class="ab" style="left:514px;top:381px;width:1px;height:471px;background:#e0e0e0"></div>
<div class="ab" style="left:590px;top:381px;width:1px;height:471px;background:#e0e0e0"></div>
<div class="ab" style="left:667px;top:381px;width:1px;height:471px;background:#e0e0e0"></div>
<div class="ab" style="left:755px;top:381px;width:1px;height:471px;background:#e0e0e0"></div>
<div class="ab" style="left:843px;top:381px;width:1px;height:471px;background:#e0e0e0"></div>
<div class="ab" style="left:920px;top:381px;width:1px;height:471px;background:#e0e0e0"></div>
<div class="ab" style="left:997px;top:381px;width:1px;height:471px;background:#e0e0e0"></div>
<div class="ab" style="left:1074px;top:381px;width:1px;height:471px;background:#e0e0e0"></div>
<div class="ab" style="left:1151px;top:381px;width:1px;height:471px;background:#e0e0e0"></div>
<div class="ab" style="left:1228px;top:381px;width:1px;height:471px;background:#e0e0e0"></div>
<div class="ab" style="left:1305px;top:381px;width:1px;height:471px;background:#e0e0e0"></div>
<div class="ab" style="left:1382px;top:381px;width:1px;height:471px;background:#e0e0e0"></div>
<div class="ab" style="left:1442px;top:381px;width:1px;height:471px;background:#e0e0e0"></div>
<div class="ab" style="left:1227px;top:408px;width:76px;height:28px;border:2px solid #21b07c"></div>
<div class="ab" style="left:1302px;top:435px;width:6px;height:6px;background:#21b07c;border:0"></div>
<svg class="ab" style="left:0;top:0" width="1453" height="852" viewBox="0 0 1453 852">
<rect x="1217.5" y="339.5" width="103" height="507" fill="none" stroke="#f01af0" stroke-width="3"/>
<path d="M962.5,19.5 L980,13.5 L979,18 L1200,56.5 L978,25.5 L978,30 Z" fill="#f01af0"/>
</svg>
</body></html>
